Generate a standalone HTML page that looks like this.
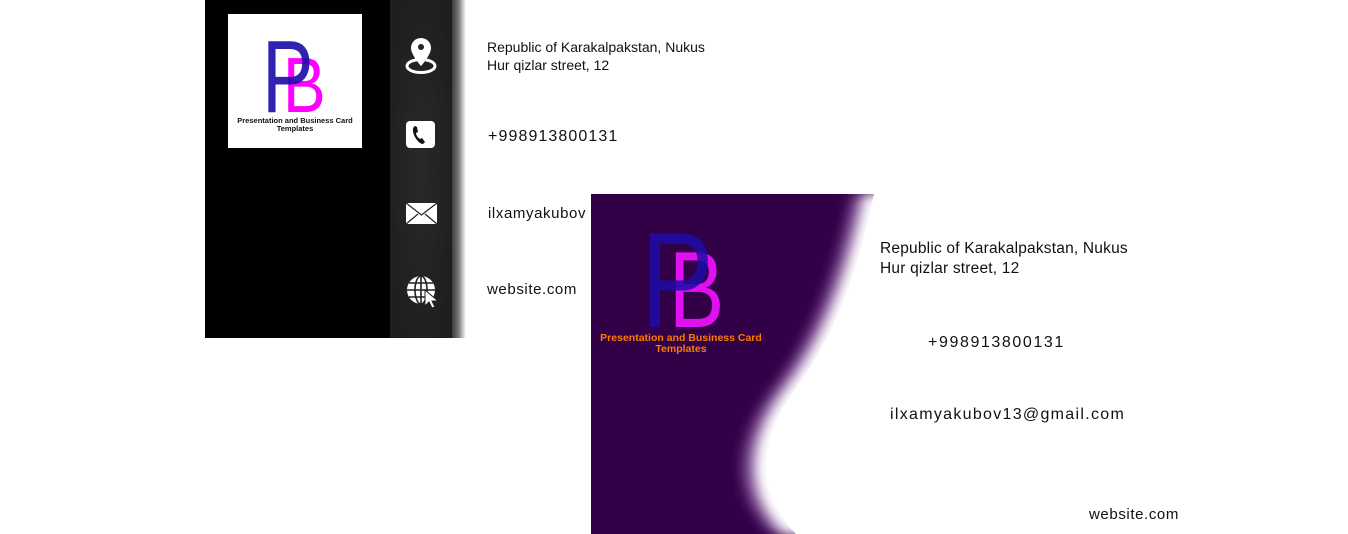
<!DOCTYPE html>
<html><head><meta charset="utf-8"><style>
html,body{margin:0;padding:0;background:#fff;width:1348px;height:534px;overflow:hidden;position:relative;font-family:"Liberation Sans",sans-serif}
.t{position:absolute;color:#111;white-space:nowrap}
</style></head><body>
<svg width="1348" height="534" style="position:absolute;left:0;top:0">
<defs>
<linearGradient id="sh" x1="0" x2="1"><stop offset="0" stop-color="#333"/><stop offset="0.5" stop-color="#777"/><stop offset="1" stop-color="#fff"/></linearGradient>
<radialGradient id="pg" cx="0.5" cy="0.5" r="0.6"><stop offset="0" stop-color="#292929"/><stop offset="1" stop-color="#1e1e1e"/></radialGradient>
<filter id="bl" x="-20%" y="-20%" width="140%" height="140%"><feGaussianBlur stdDeviation="6"/></filter>
<clipPath id="cc"><rect x="591" y="194" width="600" height="340"/></clipPath>
</defs>
<!-- dark card -->
<rect x="451" y="0" width="15" height="338" fill="url(#sh)"/>
<rect x="205" y="0" width="186" height="338" fill="#000"/>
<rect x="390" y="0" width="62" height="338" fill="url(#pg)"/>
<rect x="228" y="14" width="134" height="134" fill="#fff"/>
<text transform="translate(283 112) scale(0.82 1)" font-family="Liberation Sans" font-size="78" fill="#ff00ff">B</text>
<text transform="translate(262 112) scale(0.75 1)" font-family="Liberation Sans" font-size="103" fill="#1b0aa8" fill-opacity="0.9">P</text>
<text x="295" y="123" text-anchor="middle" font-family="Liberation Sans" font-weight="bold" font-size="7.5" fill="#111">Presentation and Business Card</text>
<text x="295" y="131" text-anchor="middle" font-family="Liberation Sans" font-weight="bold" font-size="7.5" fill="#111">Templates</text>
<!-- icons -->
<g fill="#fff">
<path d="M421 38a10 10 0 0 0-10 10c0 7 10 18 10 18s10-11 10-18a10 10 0 0 0-10-10z"/>
<circle cx="421" cy="47" r="3" fill="#222"/>
<ellipse cx="421" cy="66" rx="14" ry="6.5" fill="none" stroke="#fff" stroke-width="3"/>
<rect x="406" y="121" width="29" height="27" rx="4"/>
<path d="M415 126c-2 1-3 4-1 9s6 9 9 9l2-2-3-4-2 1c-2-1-4-4-4-6l2-1-1-5z" fill="#111"/>
<rect x="406" y="203" width="31" height="21"/>
<path d="M406 203l15.5 12 15.5-12M406 224l12-10M437 224l-12-10" stroke="#222" stroke-width="1.2" fill="none"/>
<circle cx="421" cy="290" r="14"/>
<g stroke="#222" stroke-width="1.6" fill="none"><ellipse cx="421" cy="290" rx="6" ry="14"/><path d="M421 276v28M407 290h28M409 283h24M409 297h24"/></g>
<path d="M425 290l0 16 4-4 3 6 3-1-3-6 6 0z" stroke="#222" stroke-width="1"/>
</g>
<!-- purple card -->
<g clip-path="url(#cc)">
<rect x="591" y="194" width="600" height="340" fill="#320046"/>
<path d="M852 194C838 260 818 330 772 390C727 450 737 500 772 534L1200 534L1200 194Z" fill="#7a4a90" filter="url(#bl)"/>
<path d="M864 194C850 260 830 330 784 390C740 450 750 500 784 534L1200 534L1200 194Z" fill="#fff" filter="url(#bl)"/>
<path d="M874 194C860 260 840 330 794 390C752 450 762 500 796 534L1200 534L1200 194Z" fill="#fff"/>
<text transform="translate(669 327) scale(0.76 1)" font-family="Liberation Sans" font-size="109" fill="#e010f0">B</text>
<text transform="translate(641 327) scale(0.8 1)" font-family="Liberation Sans" font-size="136" fill="#1f0aa8" fill-opacity="0.85">P</text>
<text x="681" y="341" text-anchor="middle" font-family="Liberation Sans" font-weight="bold" font-size="10.5" fill="#ff7a00">Presentation and Business Card</text>
<text x="681" y="352" text-anchor="middle" font-family="Liberation Sans" font-weight="bold" font-size="10.5" fill="#ff7a00">Templates</text>
</g>
</svg>
<div class="t" style="left:487px;top:38px;font-size:14px;line-height:18px">Republic of Karakalpakstan, Nukus<br>Hur qizlar street, 12</div>
<div class="t" style="left:488px;top:128px;font-size:16px;letter-spacing:1.1px">+998913800131</div>
<div class="t" style="left:488px;top:205px;font-size:15px;letter-spacing:0.6px">ilxamyakubov</div>
<div class="t" style="left:487px;top:281px;font-size:15px;letter-spacing:0.6px">website.com</div>
<div class="t" style="left:880px;top:239px;font-size:15.5px;line-height:20px;letter-spacing:0.2px">Republic of Karakalpakstan, Nukus<br>Hur qizlar street, 12</div>
<div class="t" style="left:928px;top:334px;font-size:16px;letter-spacing:1.6px">+998913800131</div>
<div class="t" style="left:890px;top:406px;font-size:16px;letter-spacing:1.3px">ilxamyakubov13@gmail.com</div>
<div class="t" style="left:1089px;top:506px;font-size:15px;letter-spacing:0.6px">website.com</div>
</body></html>
